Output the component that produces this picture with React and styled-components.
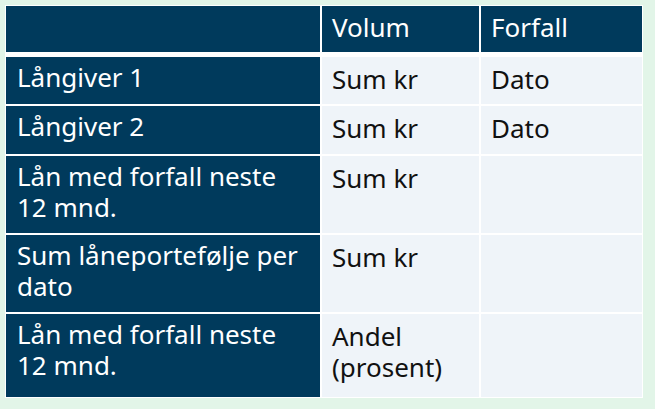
import React from "react";
import styled, { createGlobalStyle } from "styled-components";

const GlobalStyle = createGlobalStyle`
  html, body {
    margin: 0;
    padding: 0;
    background: #e2f5e8;
  }
`;

const Page = styled.main`
  min-height: 100vh;
  box-sizing: border-box;
  padding: 5px 0 0 5px;
  background: #e2f5e8;
`;

const Table = styled.div`
  display: inline-grid;
  grid-template-columns: 314px 157px 161px;
  grid-template-rows: 49px 47px 48px 77px 77px 83px;
  gap: 2px;
  padding: 1px;
  background: #ffffff;
`;

const Cell = styled.div`
  box-sizing: border-box;
  font-family: "Noto Sans", "Open Sans", sans-serif;
  font-size: 26px;
  line-height: 31px;
  padding: ${(p) => (p.$label ? "5px 8px 0 11px" : "7px 8px 0 10px")};
  margin-bottom: ${(p) => (p.$head ? "3px" : "0")};
  background: ${(p) => (p.$dark ? "#003a5c" : "#eff4f9")};
  color: ${(p) => (p.$dark ? "#ffffff" : "#111111")};
`;

const HeadCell = styled(Cell).attrs({ $dark: true, $head: true })`
  padding-top: 6px;
`;

const rows = [
  { label: ["Långiver 1"], volum: ["Sum kr"], forfall: "Dato" },
  { label: ["Långiver 2"], volum: ["Sum kr"], forfall: "Dato" },
  { label: ["Lån med forfall neste", "12 mnd."], volum: ["Sum kr"], forfall: "" },
  { label: ["Sum låneportefølje per", "dato"], volum: ["Sum kr"], forfall: "" },
  { label: ["Lån med forfall neste", "12 mnd."], volum: ["Andel", "(prosent)"], forfall: "" },
];

const Lines = ({ lines }) =>
  lines.map((line, i) => (
    <React.Fragment key={i}>
      {i > 0 && <br />}
      {line}
    </React.Fragment>
  ));

const App = () => (
  <>
    <GlobalStyle />
    <Page>
      <Table>
        <HeadCell $label />
        <HeadCell>Volum</HeadCell>
        <HeadCell>Forfall</HeadCell>
        {rows.map((row, i) => (
          <React.Fragment key={i}>
            <Cell $dark $label>
              <Lines lines={row.label} />
            </Cell>
            <Cell>
              <Lines lines={row.volum} />
            </Cell>
            <Cell>{row.forfall}</Cell>
          </React.Fragment>
        ))}
      </Table>
    </Page>
  </>
);

export default App;
